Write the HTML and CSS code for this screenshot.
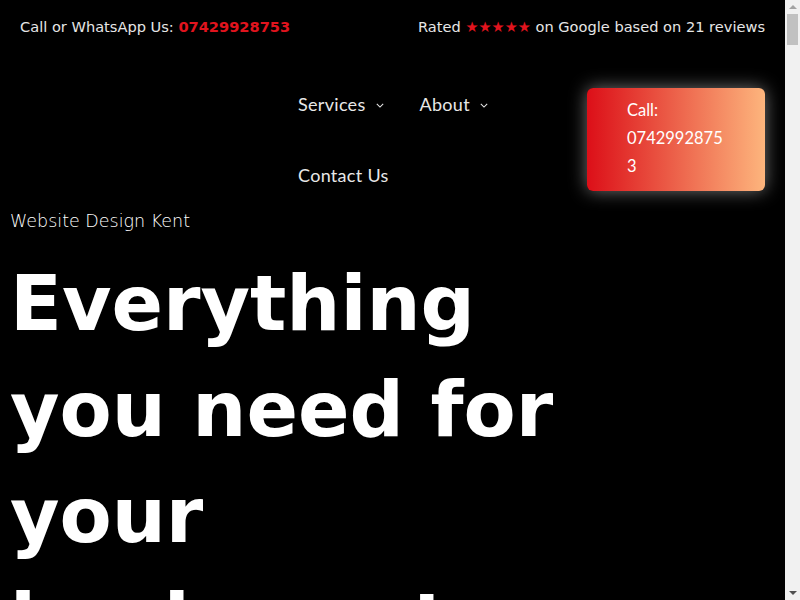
FILE: index.html
```html
<!DOCTYPE html>
<html lang="en">
<head>
    <meta charset="UTF-8">
    <meta name="viewport" content="width=device-width, initial-scale=1.0">
    <title>Website Design Kent</title>
    <link rel="stylesheet" href="styles.css">
</head>
<body>
    <div class="page">
        <div class="topbar">
            <p>Call or WhatsApp Us: <a href="#" class="red">07429928753</a></p>
            <p>Rated <span class="red">★★★★★</span> on Google based on 21 reviews</p>
        </div>

        <header class="header">
            <nav class="nav">
                <a href="#" class="nav-item">Services
                    <svg class="chev" viewBox="0 0 10 6"><path d="M1 1l4 4 4-4" /></svg>
                </a>
                <a href="#" class="nav-item">About
                    <svg class="chev" viewBox="0 0 10 6"><path d="M1 1l4 4 4-4" /></svg>
                </a>
                <a href="#" class="nav-item">Contact Us</a>
            </nav>
            <a href="#" class="call-btn">Call: 07429928753</a>
        </header>

        <section class="hero">
            <p class="eyebrow">Website Design Kent</p>
            <h1>Everything you need for your business to grow online</h1>
            <p class="lead">Websites, SEO and marketing for small businesses across Kent.</p>
        </section>

        <section class="block">
            <h2>Our Services</h2>
            <p>Web design, hosting, search engine optimisation and social media.</p>
        </section>
        <section class="block">
            <h2>About Us</h2>
            <p>A local team helping Kent businesses get found online.</p>
        </section>
    </div>

    <!-- fake window scrollbar -->
    <div class="scrollbar">
        <span class="arrow up"></span>
        <div class="track"><span class="thumb"></span></div>
        <span class="arrow down"></span>
    </div>
</body>
</html>
```

FILE: styles.css
```css
* {
    margin: 0;
    padding: 0;
    box-sizing: border-box;
}

body {
    display: flex;
    align-items: flex-start;
    background: #000;
    color: #fff;
    font-family: 'DejaVu Sans', sans-serif;
}

a {
    color: inherit;
    text-decoration: none;
}

.page {
    flex: 1;
    min-width: 0;
}

.scrollbar {
    position: sticky;
    top: 0;
    flex-shrink: 0;
    display: flex;
    flex-direction: column;
    align-items: center;
    width: 15px;
    height: 100vh;
    background: #f1f1f1;
}

.arrow {
    width: 0;
    height: 0;
    margin: 5px 0;
    border-left: 4px solid transparent;
    border-right: 4px solid transparent;
}

.arrow.up {
    border-bottom: 4px solid #a3a3a3;
}

.arrow.down {
    border-top: 4px solid #505050;
}

.track {
    flex: 1;
    width: 100%;
    padding: 0 2px;
}

.thumb {
    display: block;
    height: 31px;
    background: #c1c1c1;
}

.red {
    color: #e0141e;
}

.topbar {
    display: flex;
    justify-content: space-between;
    align-items: center;
    height: 52px;
    padding: 0 20px;
    font-size: 14.6px;
    color: #e6e6e6;
}

.topbar a {
    font-weight: bold;
}

.header {
    display: flex;
    align-items: center;
    padding: 16px 20px 0 280px;
}

.nav {
    flex: 1;
    display: flex;
    flex-wrap: wrap;
    font-family: 'Lato', sans-serif;
    font-size: 18px;
    letter-spacing: 0.3px;
    color: #e8e8e8;
}

.nav-item {
    display: flex;
    align-items: center;
    height: 71.5px;
    padding: 0 18px;
}

.chev {
    width: 8px;
    height: 5px;
    margin: 3px 0 0 10px;
    fill: none;
    stroke: #e8e8e8;
    stroke-width: 1.3;
}

.call-btn {
    width: 178px;
    height: 103px;
    margin-left: 20px;
    padding: 8px 36px 8px 40px;
    border-radius: 6px;
    background: linear-gradient(90deg, #dc0f18, #fdb57d);
    box-shadow: 0 0 18px rgba(255, 255, 255, 0.45);
    font-family: 'Lato', sans-serif;
    font-size: 16.5px;
    line-height: 28px;
    color: #fff;
    overflow-wrap: anywhere;
}

.hero {
    padding: 0 10px;
}

.eyebrow {
    font-size: 17.5px;
    font-weight: 200;
    line-height: 20px;
}

.hero h1 {
    margin-top: 20px;
    max-width: 560px;
    font-size: 76px;
    line-height: 106px;
    font-weight: bold;
}

.lead {
    margin: 40px 0;
    font-size: 20px;
    color: #ccc;
}

.block {
    min-height: 3000px;
    padding: 60px 10px;
}

.block h2 {
    font-size: 48px;
    margin-bottom: 20px;
}
```
